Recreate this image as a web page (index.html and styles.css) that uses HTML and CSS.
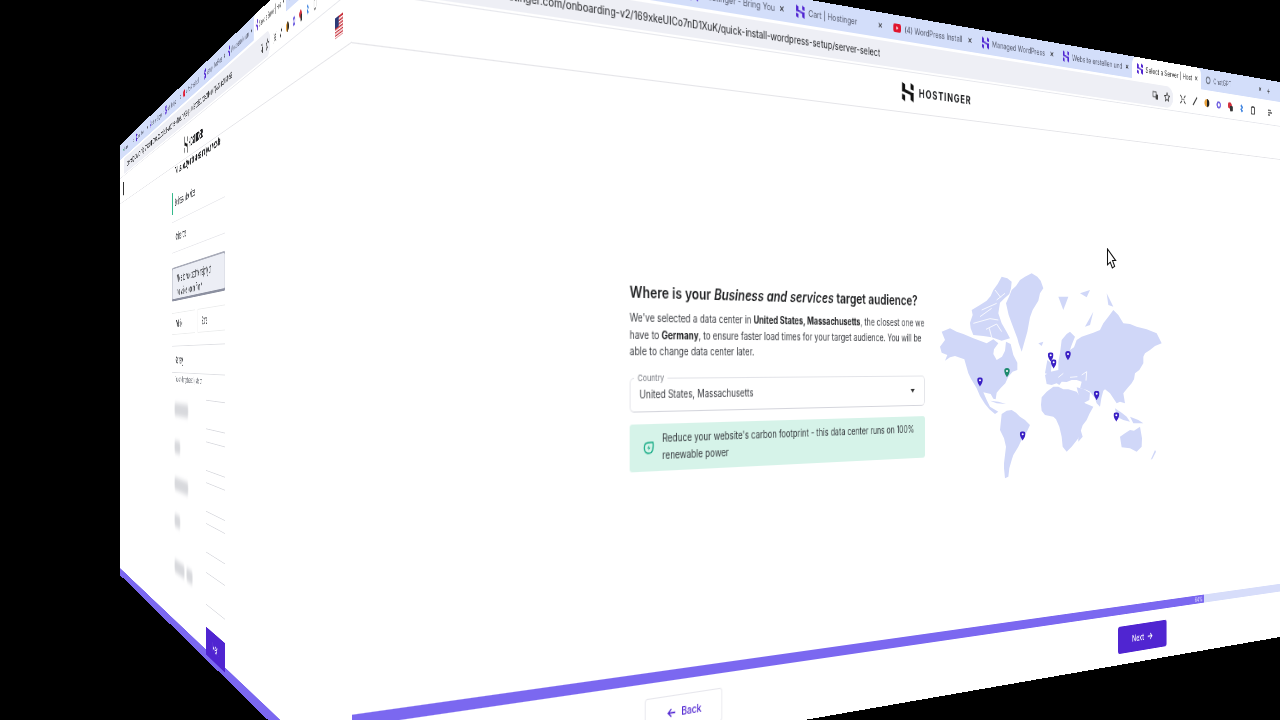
FILE: index.html
```html
<!DOCTYPE html>
<html lang="en">
<head>
<meta charset="utf-8">
<title>Select a Server | Hostinger</title>
<link rel="stylesheet" href="styles.css">
</head>
<body>
<svg class="defs" aria-hidden="true">
  <symbol id="i-h" viewBox="0 0 22 26">
    <path d="M0 0L6 3V9.5L19 13H0Z"/><path d="M16 0L22 3V10L16 8.5Z"/><path d="M22 26L16 23V16.5L3 13H22Z"/><path d="M6 26L0 23V16L6 17.5Z"/>
  </symbol>
  <symbol id="i-yt" viewBox="0 0 12 10"><rect width="12" height="10" rx="2.5" fill="#e0142c"/><path d="M4.8 3L8 5L4.8 7Z" fill="#fff"/></symbol>
  <symbol id="i-gpt" viewBox="0 0 10 10"><circle cx="5" cy="5" r="3.6" fill="none" stroke="#6b7280" stroke-width="1.6"/></symbol>
  <symbol id="i-star" viewBox="0 0 12 12"><path d="M6 1L7.5 4.4L11 4.8L8.4 7.2L9.2 11L6 9L2.8 11L3.6 7.2L1 4.8L4.5 4.4Z" fill="none" stroke="#333" stroke-width="1.1"/></symbol>
  <symbol id="i-tr" viewBox="0 0 12 12"><rect x="1" y="2" width="6" height="6" fill="none" stroke="#444" stroke-width="1.1"/><rect x="6" y="5" width="5" height="6" fill="#444"/></symbol>
  <symbol id="i-exp" viewBox="0 0 12 12"><path d="M1 1L4 4M11 1L8 4M1 11L4 8M11 11L8 8M3 6H9" fill="none" stroke="#222" stroke-width="1.2"/></symbol>
  <symbol id="i-pen" viewBox="0 0 12 12"><path d="M2 11L10 1" stroke="#222" stroke-width="1.6"/></symbol>
  <symbol id="i-org" viewBox="0 0 12 12"><circle cx="6" cy="6" r="5" fill="#e8a13a"/><path d="M6 1A5 5 0 0 1 6 11Z" fill="#222"/></symbol>
  <symbol id="i-gear" viewBox="0 0 12 12"><circle cx="6" cy="6" r="3.4" fill="none" stroke="#6d5de0" stroke-width="2.4"/></symbol>
  <symbol id="i-red" viewBox="0 0 12 12"><circle cx="5" cy="4.5" r="4" fill="#d2303c"/><rect x="5" y="5" width="6" height="6.5" rx="1" fill="#333"/></symbol>
  <symbol id="i-blue" viewBox="0 0 12 12"><path d="M6 1L9 5L6 7L9 9L6 11L3 7L6 5L3 3Z" fill="#3b82e0"/></symbol>
  <symbol id="i-clip" viewBox="0 0 12 12"><rect x="2.5" y="2" width="7" height="9" rx="1" fill="none" stroke="#333" stroke-width="1.2"/><rect x="4.5" y="1" width="3" height="2" fill="#333"/></symbol>
  <symbol id="i-menu" viewBox="0 0 12 12"><path d="M2 3H8M2 6H10M2 9H6" stroke="#444" stroke-width="1.3"/></symbol>
  <symbol id="i-pin" viewBox="0 0 17 28"><path d="M8.5 0a8.5 8.5 0 0 1 8.5 9c0 6-8.5 19-8.5 19s-8.5-13-8.5-19a8.5 8.5 0 0 1 8.5-9z"/><circle cx="8.5" cy="9" r="3" fill="#fff"/></symbol>
</svg>

<main class="stage">

  <section class="plane plane-left">
    <div class="chrome chrome-left">
      <div class="tabs">
        <div class="tab"><svg class="fav fav-green"><use href="#i-h"/></svg><span class="tab-title">Hostinger</span><span class="tab-x">×</span></div>
        <div class="tab"><svg class="fav"><use href="#i-h"/></svg><span class="tab-title">Domain Checker</span><span class="tab-x">×</span></div>
        <div class="tab"><svg class="fav"><use href="#i-h"/></svg><span class="tab-title">Hostinger - Bring Your</span><span class="tab-x">×</span></div>
        <div class="tab"><svg class="fav"><use href="#i-h"/></svg><span class="tab-title">Cart | Hostinger</span><span class="tab-x">×</span></div>
        <div class="tab"><svg class="fav"><use href="#i-yt"/></svg><span class="tab-title">(4) WordPress Install</span><span class="tab-x">×</span></div>
        <div class="tab"><svg class="fav"><use href="#i-h"/></svg><span class="tab-title">Managed WordPress</span><span class="tab-x">×</span></div>
        <div class="tab"><svg class="fav"><use href="#i-h"/></svg><span class="tab-title">Website erstellen und</span><span class="tab-x">×</span></div>
        <div class="tab tab-active"><svg class="fav"><use href="#i-h"/></svg><span class="tab-title">Select a Server | Hostinger</span><span class="tab-x">×</span></div>
        <div class="tab"><svg class="fav"><use href="#i-gpt"/></svg><span class="tab-title">ChatGPT</span><span class="tab-x">×</span></div>
      </div>
      <div class="toolbar">
        <div class="omnibox"><span class="url">hpanel.hostinger.com/onboarding-v2/169xkeUICo7nD1XuK/quick-install-wordpress-setup/survey?step=audience&amp;source=onboarding&amp;plan=business</span><svg class="tool"><use href="#i-tr"/></svg><svg class="tool"><use href="#i-star"/></svg></div>
        <div class="exts">
          <svg class="tool"><use href="#i-exp"/></svg><svg class="tool"><use href="#i-pen"/></svg><svg class="tool"><use href="#i-org"/></svg><svg class="tool"><use href="#i-gear"/></svg><svg class="tool"><use href="#i-red"/></svg><svg class="tool"><use href="#i-blue"/></svg><svg class="tool"><use href="#i-clip"/></svg>
        </div>
      </div>
    </div>
    <header class="left-head">
      <span class="menu-dots"></span>
      <span class="left-logo"><svg class="left-mark"><use href="#i-h"/></svg><span class="left-brand">HOSTINGER</span></span>
      <svg class="flag" viewBox="0 0 23 18" aria-label="United States flag">
        <rect width="23" height="18" fill="#c8323c"/>
        <path d="M0 2.8H23M0 5.6H23M0 8.4H23M0 11.2H23M0 14H23M0 16.8H23" stroke="#fff" stroke-width="1.4"/>
        <rect width="10" height="9" fill="#2d3a78"/>
      </svg>
    </header>
    <div class="wizard">
      <div class="wizard-title">Tell us about your business and your website</div>
      <div class="wizard-row wizard-row-first"><span class="green-mark"></span><span>Business and services</span></div>
      <div class="wizard-row"><span>Online store</span></div>
      <div class="wizard-question">Where do you expect the majority of<br>your visitors to come from?</div>
      <div class="wizard-pair"><div class="wizard-cell">Website</div><div class="wizard-cell">Store</div></div>
      <div class="wizard-field">Germany</div>
      <div class="wizard-help">You can change this setting later on</div>
      <div class="wizard-list">
        <div class="list-row list-row-a"><span class="blob blob-a"></span><span class="list-end"></span></div>
        <div class="list-row list-row-b"><span class="blob blob-b"></span><span class="list-end"></span></div>
        <div class="list-row list-row-c"><span class="blob blob-a"></span><span class="list-end"></span></div>
        <div class="list-row list-row-d"><span class="blob blob-b"></span><span class="list-end"></span></div>
        <div class="list-row list-row-e"><span class="blob blob-c"></span><span class="blob blob-b"></span><span class="list-end"></span></div>
      </div>
    </div>
    <div class="left-bar"></div>
    <a class="left-next">Next</a>
  </section>

  <section class="plane plane-right">
    <div class="chrome chrome-right">
      <div class="tabs">
        <div class="tab"><svg class="fav"><use href="#i-h"/></svg><span class="tab-title">Hostinger</span><span class="tab-x">×</span></div>
        <div class="tab"><svg class="fav"><use href="#i-h"/></svg><span class="tab-title">Domain Checker</span><span class="tab-x">×</span></div>
        <div class="tab"><svg class="fav"><use href="#i-h"/></svg><span class="tab-title">Hostinger - Bring Your</span><span class="tab-x">×</span></div>
        <div class="tab"><svg class="fav"><use href="#i-h"/></svg><span class="tab-title">Cart | Hostinger</span><span class="tab-x">×</span></div>
        <div class="tab"><svg class="fav"><use href="#i-yt"/></svg><span class="tab-title">(4) WordPress Install</span><span class="tab-x">×</span></div>
        <div class="tab"><svg class="fav"><use href="#i-h"/></svg><span class="tab-title">Managed WordPress</span><span class="tab-x">×</span></div>
        <div class="tab"><svg class="fav"><use href="#i-h"/></svg><span class="tab-title">Website erstellen und</span><span class="tab-x">×</span></div>
        <div class="tab tab-active"><svg class="fav"><use href="#i-h"/></svg><span class="tab-title">Select a Server | Hostinger</span><span class="tab-x">×</span></div>
        <div class="tab"><svg class="fav"><use href="#i-gpt"/></svg><span class="tab-title">ChatGPT</span><span class="tab-x">×</span></div>
        <span class="new-tab">+</span>
      </div>
      <div class="toolbar">
        <div class="omnibox"><span class="url">hpanel.hostinger.com/onboarding-v2/169xkeUICo7nD1XuK/quick-install-wordpress-setup/server-select</span><svg class="tool"><use href="#i-tr"/></svg><svg class="tool"><use href="#i-star"/></svg></div>
        <div class="exts">
          <svg class="tool"><use href="#i-exp"/></svg><svg class="tool"><use href="#i-pen"/></svg><svg class="tool"><use href="#i-org"/></svg><svg class="tool"><use href="#i-gear"/></svg><svg class="tool"><use href="#i-red"/></svg><svg class="tool"><use href="#i-blue"/></svg><svg class="tool"><use href="#i-clip"/></svg><svg class="tool tool-last"><use href="#i-menu"/></svg>
        </div>
      </div>
    </div>
    <header class="site-head">
      <svg class="logo-mark"><use href="#i-h"/></svg>
      <span class="brand">HOSTINGER</span>
    </header>
    <div class="content">
      <h1 class="title">Where is your <em>Business and services</em> target audience?</h1>
      <p class="lead">We've selected a data center in <b>United States, Massachusetts</b>, the closest one we<br>have to <b>Germany</b>, to ensure faster load times for your target audience. You will be<br>able to change data center later.</p>
      <div class="field">
        <span class="field-label">Country</span>
        <span class="field-value">United States, Massachusetts</span>
        <span class="field-caret"></span>
      </div>
      <div class="notice">
        <svg class="notice-icon" viewBox="0 0 16 16"><path d="M3 3.5C6 1.5 11 2 14 2C14.5 6 14.5 11 11.5 13.5C8.5 15 4 14.5 2.5 11.5C1.5 9 1.8 5.5 3 3.5Z" fill="none" stroke="#00a37a" stroke-width="1.5"/><path d="M9 5L6 8.7H8.5L7.3 11.5L10.5 7.6H8.2Z" fill="#00a37a"/></svg>
        <span>Reduce your website's carbon footprint - this data center runs on 100%<br>renewable power</span>
      </div>
    </div>
    <div class="progress"><div class="progress-fill" style="width:64%"><span>64%</span></div></div>
    <footer class="actions">
      <a class="btn btn-back"><svg class="btn-arrow" viewBox="0 0 12 12"><path d="M11 6H2M6 2L2 6L6 10" fill="none" stroke="currentColor" stroke-width="1.4"/></svg>Back</a>
      <a class="btn btn-next">Next<svg class="btn-arrow" viewBox="0 0 12 12"><path d="M1 6H10M6 2L10 6L6 10" fill="none" stroke="currentColor" stroke-width="1.4"/></svg></a>
    </footer>
  </section>

  <svg class="map" viewBox="0 0 720 675" aria-label="World map">
    <g class="land">
      <path d="M305 40L322 50L332 62L340 85L330 100L325 122L308 150L300 172L292 215L275 275L266 250L262 235L245 190L236 165L228 130L238 108L245 90L258 78L270 60L285 50Z"/>
      <path d="M215 50L232 55L245 65L243 85L238 102L222 116L210 128L205 160L215 190L228 212L240 235L215 242L185 232L160 228L130 225L122 205L120 188L128 165L125 150L150 135L170 122L182 108L190 90L203 72Z"/>
      <path d="M35 215L60 205L80 215L100 222L130 235L170 250L190 238L205 250L192 268L190 282L200 300L216 290L225 272L228 245L242 252L250 285L262 308L262 330L248 335L235 350L226 370L212 384L200 398L197 418L190 416L182 402L160 397L170 420L180 440L205 455L195 462L178 448L165 432L150 408L140 385L122 355L115 340L107 312L103 298L75 288L60 292L45 302L52 285L35 278L30 260L45 240Z"/>
      <path d="M180 422L205 425L228 432L200 430Z"/>
      <path d="M215 462L230 452L245 450L258 458L270 470L285 480L300 495L292 512L285 525L272 545L265 560L250 585L245 600L238 625L235 650L225 655L222 625L222 610L228 560L222 535L210 510Z"/>
      <path d="M335 412L350 395L370 380L385 380L400 388L415 388L440 395L452 412L465 430L490 440L478 462L470 480L458 496L455 505L445 535L425 560L410 575L398 560L395 530L388 500L378 478L370 470L345 465L335 452L333 435Z"/>
      <path d="M452 510L458 530L445 545L445 520Z"/>
      <path d="M350 372L345 345L362 335L385 330L385 305L390 280L395 240L410 222L420 215L435 230L425 255L420 270L432 262L440 240L455 230L470 225L490 218L510 210L520 190L535 170L550 150L565 165L580 190L600 192L620 200L650 208L680 220L695 250L675 258L660 270L645 280L640 290L640 310L628 330L615 340L612 358L605 370L592 385L580 400L585 430L570 425L560 430L548 412L540 400L525 388L520 392L514 415L510 440L500 430L495 415L480 395L470 390L450 385L455 365L440 360L425 360L410 366L395 365L388 375L380 370L365 375Z"/>
      <path d="M440 382L462 388L480 398L478 420L455 432L446 405Z"/>
      <path d="M555 445L575 458L590 470L600 485L580 480L560 470Z"/>
      <path d="M600 470L625 480L640 490L610 490Z"/>
      <path d="M570 530L585 520L600 510L612 512L630 500L636 535L635 560L620 575L600 565L575 562Z"/>
      <path d="M675 570L662 600L668 595L678 575Z"/>
      <path d="M352 300L365 310L362 345L345 340Z"/>
      <path d="M325 250L340 245L335 258Z"/>
      <path d="M385 110L415 110L400 150Z"/>
      <path d="M450 100L480 90L470 112Z"/>
      <path d="M530 100L550 140L535 135Z"/>
      <path d="M465 200L490 155L480 195Z"/>
    </g>
    <g class="cracks">
      <path d="M130 190L180 176L205 180M155 150L200 130M168 208L200 192L215 215M195 90L212 112M150 170L185 145M185 232L178 205M225 100L200 120"/>
      <path d="M455 345L470 335L468 362M420 352L442 350M400 370L420 380M385 352L400 340"/>
    </g>
    <g class="pins">
      <use class="pin" href="#i-pin" x="141.5" y="352" width="17" height="28"/>
      <use class="pin pin-green" href="#i-pin" x="222.5" y="324" width="17" height="28"/>
      <use class="pin" href="#i-pin" x="353.5" y="277" width="17" height="28"/>
      <use class="pin" href="#i-pin" x="362.5" y="298" width="17" height="28"/>
      <use class="pin" href="#i-pin" x="405.5" y="273" width="17" height="28"/>
      <use class="pin" href="#i-pin" x="491.5" y="392" width="17" height="28"/>
      <use class="pin" href="#i-pin" x="550.5" y="457" width="17" height="28"/>
      <use class="pin" href="#i-pin" x="269.5" y="514" width="17" height="28"/>
    </g>
  </svg>

  <svg class="cursor" viewBox="0 0 10 20" aria-hidden="true">
    <path d="M1.2 1L9 12H6L8 17.5L5.8 19L3.8 13.5L1.2 16Z" fill="#fff" stroke="#111" stroke-width="1"/>
  </svg>
</main>
</body>
</html>
```
FILE: styles.css
```css
* { box-sizing: border-box; }

html, body {
  margin: 0;
  height: 100%;
  background: #000;
  overflow: hidden;
}

body { font-family: Inter, "Noto Sans", "Liberation Sans", sans-serif; color: #2d2f33; }

.defs { position: absolute; width: 0; height: 0; }

.stage {
  position: relative;
  width: 1280px;
  height: 720px;
  overflow: hidden;
  background: #000;
  filter: blur(0.45px);
}

/* The two faces of the folded screen: each is a flat page under a perspective matrix */
.plane {
  position: absolute;
  left: 0;
  top: 0;
  display: flex;
  flex-direction: column;
  background: #fff;
  overflow: hidden;
  transform-origin: 0 0;
}

.plane-left {
  width: 1300px;
  height: 732px;
  transform: matrix3d(0.03985, -0.14119, 0, -0.00039385, 0, 0.5875, 0, 0, 0, 0, 1, 0, 120, 145, 0, 1);
}

.plane-right {
  width: 1780px;
  height: 720px;
  transform: matrix3d(1.28868, 0.16144, 0, 0.00044908, 0, 1.22083, 0, 0, 0, 0, 1, 0, 352, -80, 0, 1);
}

/* Browser chrome */
.chrome { flex: none; height: 58px; border-bottom: 1px solid #e6e7ec; }

.tabs {
  display: flex;
  align-items: center;
  height: 26px;
  background: #d3defa;
}

.chrome-left .tabs { padding-left: 25px; }
.chrome-right .tabs { padding-left: 69px; }

.tab {
  flex: none;
  display: flex;
  align-items: center;
  gap: 5px;
  width: 133px;
  height: 26px;
  padding: 0 6px 0 9px;
  font-size: 8.8px;
  color: #555a6c;
  white-space: nowrap;
}

.tab-active { background: #fff; border-radius: 8px 8px 0 0; color: #333; }

.fav { flex: none; width: 11px; height: 13px; fill: #5025d1; }
.fav-green { fill: #2aa868; }

.tab-title { flex: 1; overflow: hidden; }
.tab-x { flex: none; font-size: 11px; color: #222; }
.new-tab { margin-left: 4px; font-size: 12px; color: #333; }

.toolbar { display: flex; align-items: center; height: 31px; }

.omnibox {
  display: flex;
  align-items: center;
  gap: 10px;
  height: 26px;
  padding: 0 6px 0 33px;
  border-radius: 13px;
  background: #eeeff5;
}

.chrome-left .omnibox { margin-left: 40px; width: 987px; }
.chrome-right .omnibox { margin-left: 68px; width: 1010px; }

.url { flex: 1; overflow: hidden; font-size: 10px; color: #202124; white-space: nowrap; }
.chrome-left .url { font-size: 11px; }

.tool { flex: none; width: 12px; height: 12px; }

.exts { display: flex; align-items: center; gap: 12px; margin-left: 13px; }
.tool-last { margin-left: 13px; }

/* Right-hand page */
.site-head {
  flex: none;
  display: flex;
  align-items: center;
  gap: 7px;
  height: 43px;
  padding-left: 622px;
  border-bottom: 1px solid #e4e4e8;
}

.logo-mark { width: 18px; height: 20px; fill: #111; }
.brand { font-size: 11.5px; font-weight: 700; letter-spacing: 1.3px; color: #1d1e20; }

.content { flex: 1; width: 656px; padding: 187px 0 0 276px; }

.title {
  margin: 0;
  font-size: 14.1px;
  line-height: 20px;
  font-weight: 600;
  color: #1d1e20;
  white-space: nowrap;
}

.title em { font-weight: 600; }

.lead {
  margin: 6px 0 0;
  font-size: 9.7px;
  line-height: 15.6px;
  color: #3b3d42;
  white-space: nowrap;
}

.lead b { font-weight: 700; color: #1d1e20; }

.field {
  position: relative;
  display: flex;
  align-items: center;
  justify-content: space-between;
  height: 32px;
  margin-top: 16px;
  padding: 0 14px 0 10px;
  border: 1px solid #e2e3e8;
  border-bottom-color: #d4d5dc;
  border-radius: 5px;
  font-size: 9.7px;
  color: #3b3d42;
}

.field-label {
  position: absolute;
  left: 4px;
  top: -6px;
  padding: 0 4px;
  background: #fff;
  font-size: 8px;
  color: #74777f;
}

.field-caret {
  border-top: 4px solid #333;
  border-left: 3px solid transparent;
  border-right: 3px solid transparent;
}

.notice {
  display: flex;
  align-items: center;
  gap: 9px;
  height: 44.5px;
  margin-top: 11px;
  padding: 0 8px 0 15px;
  border-radius: 3px;
  background: #d6f3e9;
  font-size: 9.7px;
  line-height: 16px;
  color: #33363b;
  white-space: nowrap;
}

.notice-icon { flex: none; width: 13px; height: 14px; }

.progress { flex: none; height: 10px; background: #d7ddfa; }

.progress-fill {
  display: flex;
  align-items: center;
  justify-content: flex-end;
  height: 100%;
  padding-right: 3px;
  background: #7b68f0;
  font-size: 7px;
  color: #e8e6ff;
}

.actions {
  flex: none;
  display: flex;
  align-items: flex-start;
  gap: 590px;
  height: 59px;
  padding: 14px 0 0 293px;
}

.btn {
  display: flex;
  align-items: center;
  justify-content: center;
  gap: 6px;
  width: 91px;
  height: 32px;
  border-radius: 3px;
  font-size: 10px;
  font-weight: 500;
}

.btn-back { border: 1px solid #e6e6ec; color: #5025d1; }
.btn-next { background: #5025d1; color: #fff; }
.btn-arrow { width: 11px; height: 11px; }

/* Left-hand page */
.left-head {
  flex: none;
  display: flex;
  align-items: center;
  height: 43px;
  padding: 0 25px 0 36px;
  border-bottom: 1px solid #e4e4e8;
}

.menu-dots { flex: none; width: 12px; height: 22px; border-left: 6px dashed #333; }

.left-logo { display: flex; align-items: center; gap: 6px; margin-left: 522px; margin-top: 8px; }
.left-mark { width: 27px; height: 24px; fill: #111; }
.left-brand { font-size: 15px; font-weight: 700; color: #1d1e20; }

.flag { width: 23px; height: 18px; margin-left: auto; }

.wizard {
  position: relative;
  flex: 1;
  width: 350px;
  margin-left: 484px;
  padding-right: 16px;
  border-left: 1px solid #eeeeef;
  border-right: 1px solid #eeeeef;
  font-size: 13px;
  color: #2d2f33;
  white-space: nowrap;
}

.wizard-title { height: 24px; padding: 0 0 0 23px; font-size: 13px; font-weight: 700; line-height: 14px; color: #1d1e20; }

.wizard-row {
  display: flex;
  align-items: center;
  gap: 14px;
  height: 42px;
  padding-left: 24px;
  border-bottom: 1px solid #e8e8ec;
}

.wizard-row-first { height: 52px; padding-left: 0; }
.green-mark { width: 8px; height: 30px; background: #35b98b; }

.wizard-question {
  height: 46px;
  margin-top: 20px;
  padding: 5px 0 0 30px;
  border: 2px solid #a8abb8;
  border-bottom-width: 3px;
  border-bottom-color: #8c90a0;
  border-radius: 4px;
  background: #eceef5;
  font-size: 13px;
  line-height: 18px;
  overflow: hidden;
}

.wizard-pair { display: flex; gap: 16px; height: 30px; margin-top: 16px; }

.wizard-cell {
  flex: 1;
  padding: 6px 0 0 24px;
  border: 1px solid #eceded;
}

.wizard-field {
  height: 37px;
  margin-top: 15px;
  padding: 10px 0 0 24px;
  border-top: 1px solid #dfe0e4;
  border-bottom: 1px solid #dfe0e4;
}

.wizard-help { height: 31px; padding: 2px 0 0 24px; font-size: 10.5px; color: #75787f; }

.list-row { display: flex; align-items: center; gap: 14px; height: 36px; padding-left: 18px; }
.list-row-b { margin-top: 15px; }
.list-row-c { margin-top: 14px; }
.list-row-d { margin-top: 14px; }
.list-row-e { margin-top: 24px; height: 40px; }

.list-end { width: 105px; height: 100%; margin-left: auto; border-top: 1px solid #dadbe0; border-bottom: 1px solid #dadbe0; }

.blob { height: 17px; border-radius: 6px; background: #d8d9dd; filter: blur(3px); }
.blob-a { width: 95px; }
.blob-b { width: 40px; }
.blob-c { width: 70px; }

.left-bar { position: absolute; left: 0; right: 0; bottom: 0; height: 12px; background: #7b68f0; }

.left-next {
  position: absolute;
  left: 711px;
  top: 692px;
  display: flex;
  align-items: center;
  justify-content: center;
  width: 108px;
  height: 34px;
  border-radius: 3px;
  background: #5025d1;
  font-size: 15px;
  color: #fff;
}

/* Artwork that sits on the screen, drawn in screen coordinates */
.map { position: absolute; left: 930px; top: 260px; width: 240px; height: 225px; }
.land path { fill: #d0d7f8; }
.cracks path { fill: none; stroke: #fff; stroke-width: 2.5; }
.pin { fill: #3a20c4; }
.pin-green { fill: #1d8a6d; }

.cursor { position: absolute; left: 1106px; top: 248px; width: 11px; height: 21px; }
```
